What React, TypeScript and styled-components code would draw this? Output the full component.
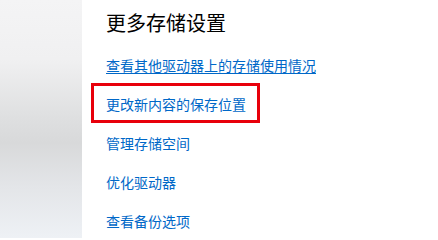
import React from 'react';
import styled, { createGlobalStyle } from 'styled-components';

const GlobalStyle = createGlobalStyle`
    html, body {
        margin: 0;
        padding: 0;
        background: #ffffff;
    }
    body {
        font-family: "Noto Sans CJK SC", "Noto Sans", sans-serif;
    }
`

const links = [
    { label: '查看其他驱动器上的存储使用情况', hovered: true },
    { label: '更改新内容的保存位置', marked: true },
    { label: '管理存储空间' },
    { label: '优化驱动器' },
    { label: '查看备份选项' },
];

export default function App() {
    return (
        <>
            <GlobalStyle />
            <Window>
                <Backdrop />
                <Page>
                    <Heading>更多存储设置</Heading>
                    <LinkList>
                        {links.map((l) => (
                            <LinkItem key={l.label} $hovered={l.hovered} $marked={l.marked}>
                                {l.label}
                            </LinkItem>
                        ))}
                    </LinkList>
                </Page>
            </Window>
        </>
    );
}

const Window = styled.div`
    display: flex;
    width: 438px;
    height: 238px;
    overflow: hidden;
`

const Backdrop = styled.div`
    width: 82px;
    flex-shrink: 0;
    background: linear-gradient(
        180deg,
        #f4f4f5 0%,
        #f0f0f1 25%,
        #dedfe0 50%,
        #d8d9da 60%,
        #e3e5e8 78%,
        #eef1f5 100%
    );
`

const Page = styled.div`
    flex: 1;
    background: #ffffff;
    padding: 9px 0 0 24px;
`

const Heading = styled.h2`
    margin: 0;
    font-size: 20px;
    line-height: 28px;
    font-weight: 400;
    color: #000000;
`

const LinkList = styled.div`
    display: flex;
    flex-direction: column;
    align-items: flex-start;
    gap: 19px;
    margin-top: 18px;
`

const LinkItem = styled.a<{ $hovered?: boolean; $marked?: boolean }>`
    position: relative;
    font-size: 14px;
    line-height: 20px;
    color: #0068c8;
    cursor: pointer;
    text-decoration: ${(p) => (p.$hovered ? 'underline' : 'none')};
    text-underline-offset: 2px;

    &::after {
        content: '';
        display: ${(p) => (p.$marked ? 'block' : 'none')};
        position: absolute;
        left: -15px;
        top: -11px;
        width: 169px;
        height: 40px;
        box-sizing: border-box;
        border: 3px solid #e8000b;
    }
`
